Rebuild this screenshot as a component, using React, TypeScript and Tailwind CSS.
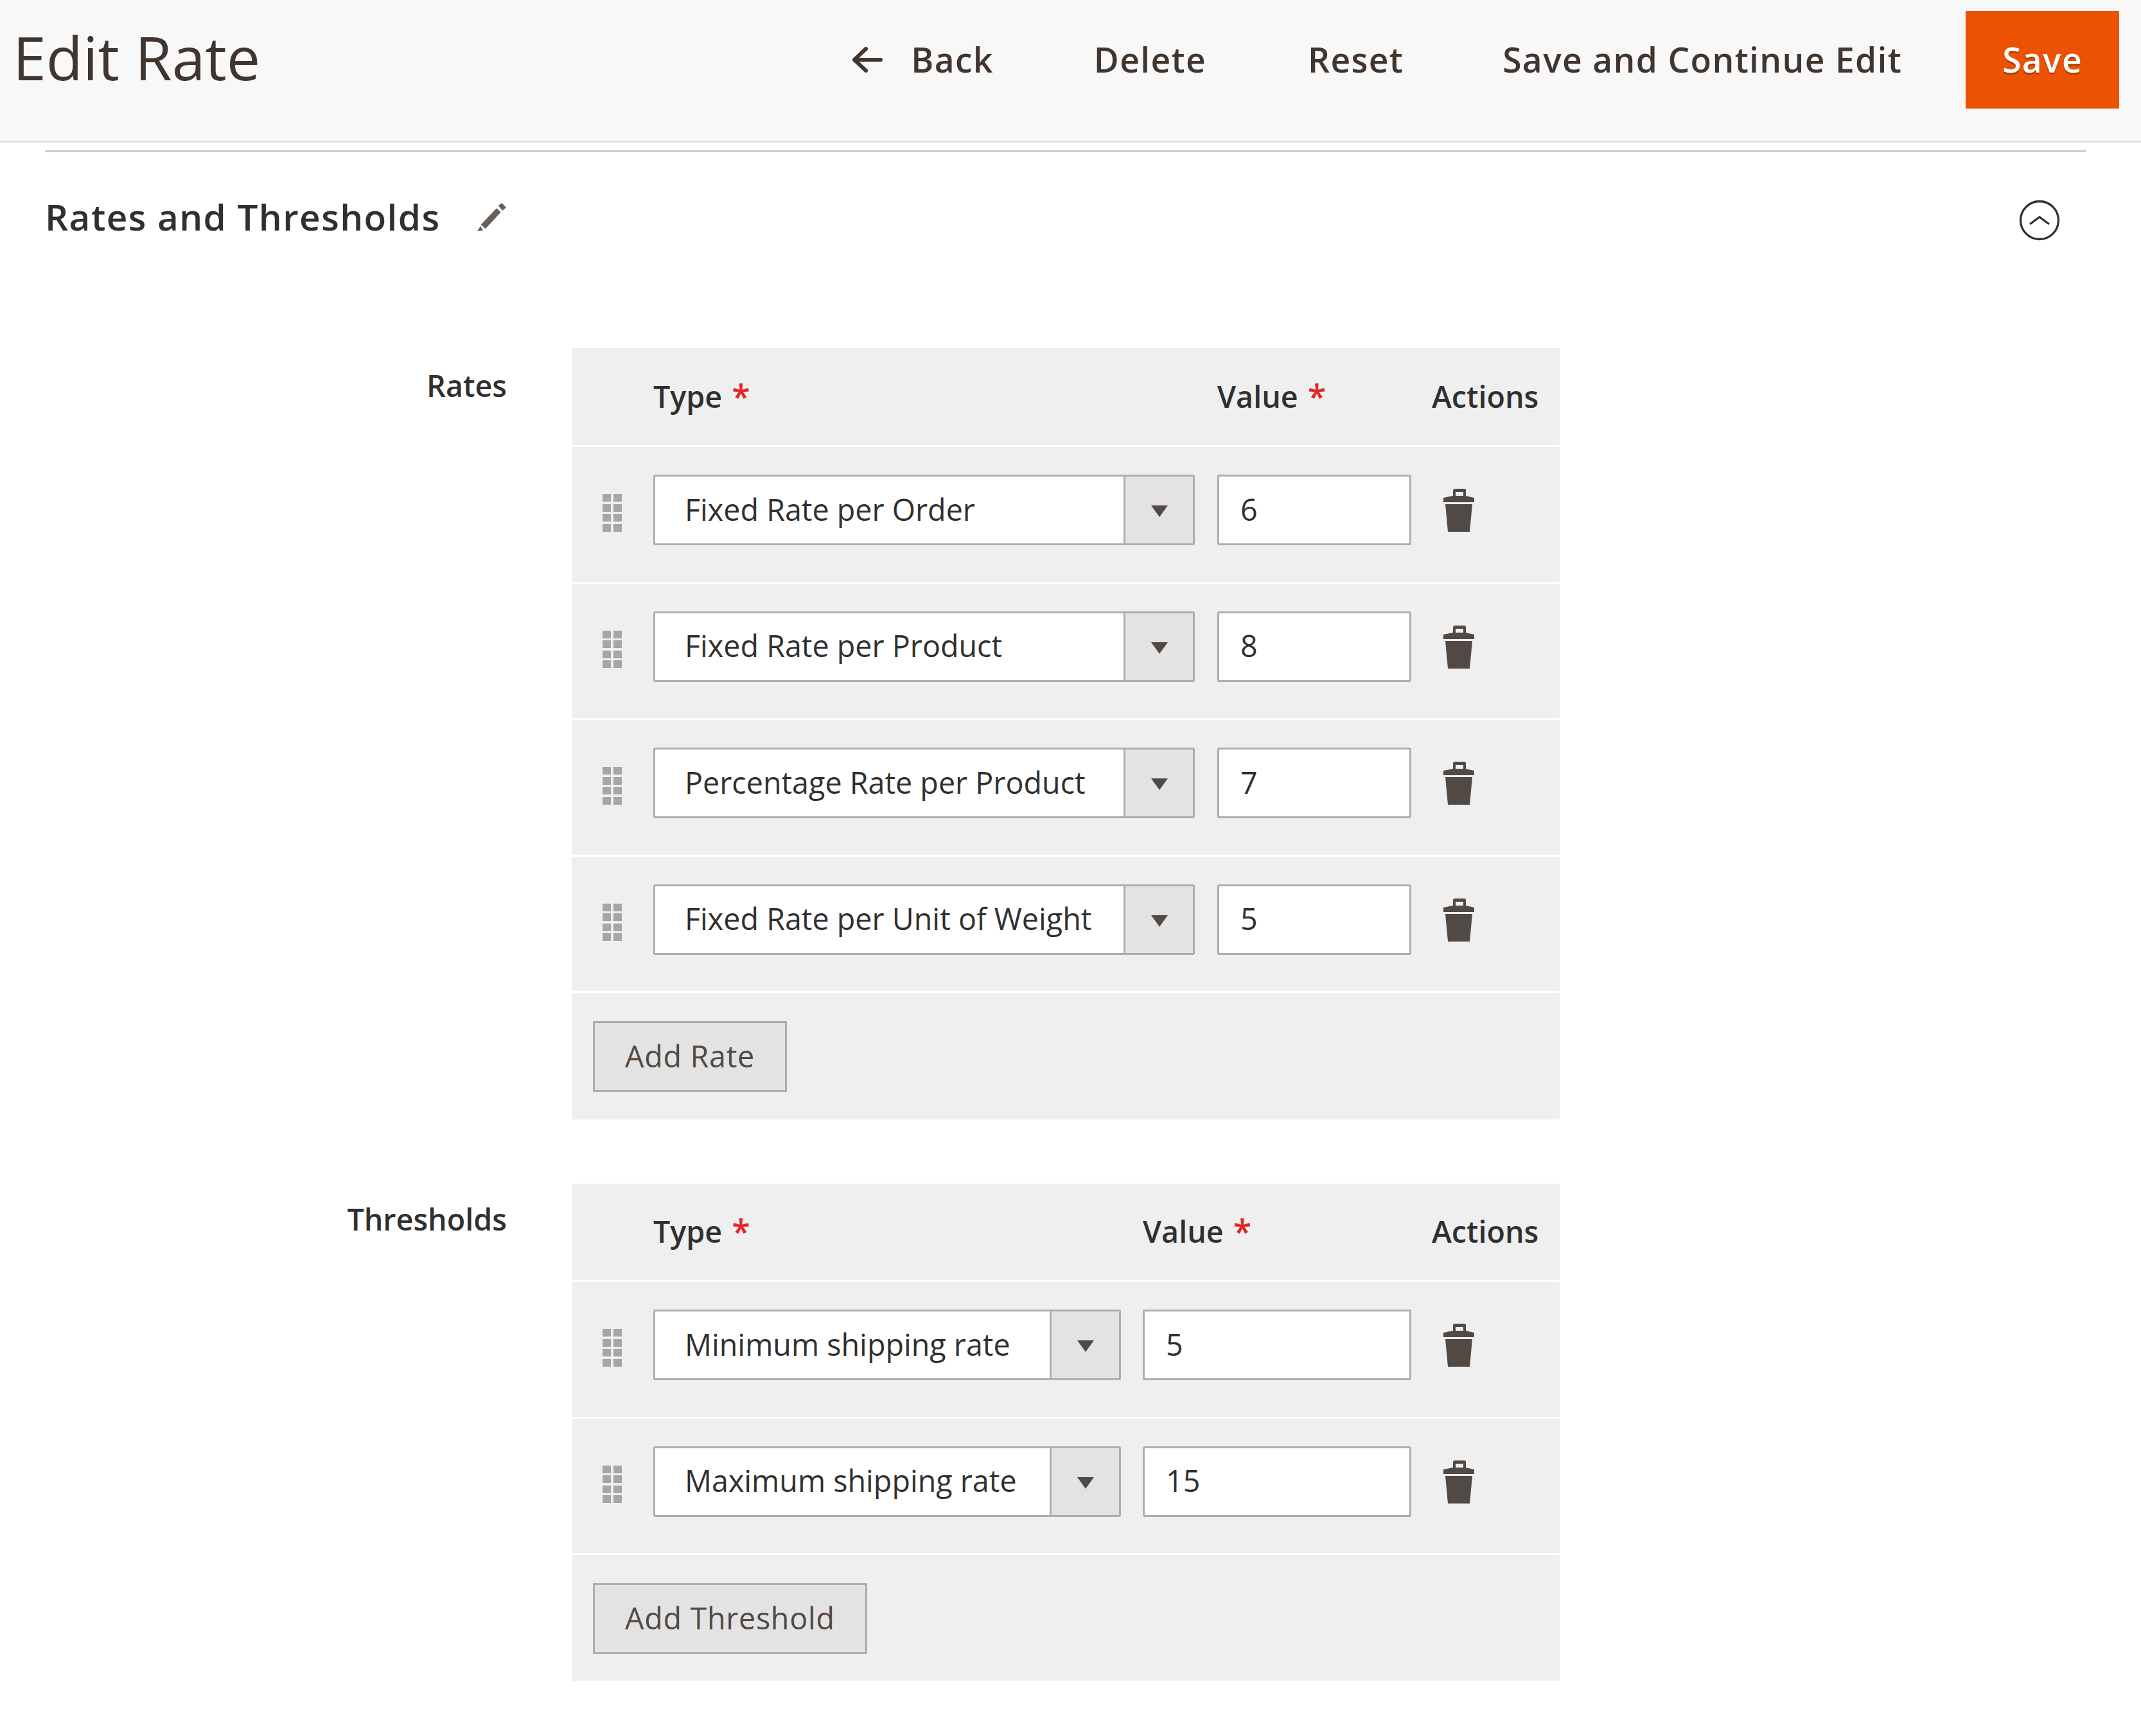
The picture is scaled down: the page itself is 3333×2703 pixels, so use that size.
type RowData = { type: string; value: string };

const rates: RowData[] = [
  { type: "Fixed Rate per Order", value: "6" },
  { type: "Fixed Rate per Product", value: "8" },
  { type: "Percentage Rate per Product", value: "7" },
  { type: "Fixed Rate per Unit of Weight", value: "5" },
];

const thresholds: RowData[] = [
  { type: "Minimum shipping rate", value: "5" },
  { type: "Maximum shipping rate", value: "15" },
];

function Grip() {
  return (
    <div className="grid grid-cols-[13px_13px] auto-rows-[12px] gap-x-1 gap-y-[3.5px]">
      {Array.from({ length: 8 }).map((_, i) => (
        <span key={i} className="bg-[#a6a6a6]" />
      ))}
    </div>
  );
}

function Trash() {
  return (
    <svg width="48" height="67" viewBox="0 0 48 67" className="text-[#514943]">
      <path
        fill="currentColor"
        fillRule="evenodd"
        d="M18 0h15a2 2 0 0 1 2 2v9l13 3v7H0v-7l15-3V3a3 3 0 0 1 3-3zm1 5v6h12V5z"
      />
      <path fill="currentColor" d="M3 24h42l-4 43H7z" />
    </svg>
  );
}

function Pencil() {
  return (
    <svg width="45" height="44" viewBox="0 0 45 44" className="text-[#676056]">
      <path
        fill="currentColor"
        d="M32.7 4.3L38.3 0 45 7l-5.7 5zM5.7 33.7L30 8.3l6.7 6-24 26zM0 44l5-8 4 7z"
      />
    </svg>
  );
}

function BackArrow() {
  return (
    <svg width="47" height="40" viewBox="0 0 47 40" fill="none" stroke="currentColor" strokeWidth="6" strokeLinecap="round" strokeLinejoin="round">
      <path d="M21 3L3 20l18 17M3 20h41" />
    </svg>
  );
}

function Collapse() {
  return (
    <svg width="64" height="64" viewBox="0 0 64 64" fill="none" stroke="#303030" strokeWidth="3.3">
      <circle cx="32" cy="32" r="29.5" />
      <path d="M17 38l15-11 15 11" />
    </svg>
  );
}

function Req() {
  return <span className="relative top-[2px] ml-[15px] text-[52px] leading-none text-[#e22626] font-semibold">*</span>;
}

function Rows({
  title,
  titleTop,
  addLabel,
  rows,
  headH,
  footH,
  typeCol,
  selectW,
  dividerW,
  valueCol,
}: {
  title: string;
  titleTop: string;
  addLabel: string;
  rows: RowData[];
  headH: string;
  footH: string;
  typeCol: string;
  selectW: string;
  dividerW: string;
  valueCol: string;
}) {
  return (
    <div className="flex items-start pl-[70px]">
      <div className={`${titleTop} w-[719px] shrink-0 text-right font-semibold text-[#303030]`}>{title}</div>
      <div className="ml-[101px] w-[1538px]">
        <div className={`${headH} flex items-center bg-[#efefef] pb-[2px] pl-[127px] font-semibold text-[#303030]`}>
          <div className={typeCol}>
            Type
            <Req />
          </div>
          <div className={valueCol}>
            Value
            <Req />
          </div>
          <div>Actions</div>
        </div>
        {rows.map((row) => (
          <div key={row.type} className="mt-[3px] flex h-[209.5px] items-start bg-[#efefef]">
            <div className="w-[127px] shrink-0 pt-[73px] pl-[48px]">
              <Grip />
            </div>
            <div className={`${typeCol} pt-[43px]`}>
              <div className={`${selectW} flex h-[110px] rounded-[3px] border-[3px] border-[#adadad] bg-white`}>
                <div className={`${dividerW} flex items-center pb-[3px] pl-[46px] text-[#303030]`}>{row.type}</div>
                <div className="flex flex-1 items-center justify-center border-l-[3px] border-[#adadad] bg-[#e3e3e3]">
                  <span className="mt-[4px] h-0 w-0 border-x-[13px] border-t-[18px] border-x-transparent border-t-[#514943]" />
                </div>
              </div>
            </div>
            <div className={`${valueCol} pt-[43px]`}>
              <input
                readOnly
                value={row.value}
                className="h-[110px] w-[calc(100%-32px)] rounded-[3px] border-[3px] border-[#adadad] bg-white pb-[3px] pl-[33px] text-[#303030] outline-none"
              />
            </div>
            <div className="pt-[65px] pl-[18px]">
              <Trash />
            </div>
          </div>
        ))}
        <div className={`${footH} mt-[3px] bg-[#efefef] pt-[44px] pl-[33px]`}>
          <button className="h-[110px] border-[3px] border-[#adadad] bg-[#e3e3e3] px-[47px] pb-[2px] font-medium tracking-[0.015em] text-[#514943]">
            {addLabel}
          </button>
        </div>
      </div>
    </div>
  );
}

export default function App() {
  return (
    <div className="min-h-[2703px] bg-white pb-[86px] font-['Open_Sans',sans-serif] text-[46.67px]">
      <header className="flex h-[222px] items-start justify-between border-b-[3px] border-[#e3e3e3] bg-[#f8f8f8] pr-[34px] pl-[20px]">
        <h1 className="mt-[24px] text-[93.33px] leading-[1.4] font-normal text-[#41362f]">Edit Rate</h1>
        <div className="mt-[17px] flex h-[152px] items-center gap-[48px] text-[53.33px] tracking-[0.025em] font-semibold text-[#41362f]">
          <button className="flex items-center pr-[53px] pl-[55px]">
            <span className="mr-[44px]">
              <BackArrow />
            </span>
            Back
          </button>
          <button className="px-[55px]">Delete</button>
          <button className="px-[55px]">Reset</button>
          <button className="px-[51px]">Save and Continue Edit</button>
          <button className="flex h-[152px] items-center bg-[#eb5202] px-[57px] text-white [text-shadow:0_3px_0_rgba(0,0,0,0.25)]">
            Save
          </button>
        </div>
      </header>

      <div className="mx-[70px] mt-[12px] w-[3177px] border-t-[3px] border-[#cccccc]" />

      <div className="flex h-[305px] items-start justify-between pt-[58px] pr-[126px] pl-[70px]">
        <div className="flex items-center text-[56.67px] font-semibold tracking-[0.025em] text-[#303030]">
          Rates and Thresholds
          <span className="ml-[58px]">
            <Pencil />
          </span>
        </div>
        <div className="mt-[16px]">
          <Collapse />
        </div>
      </div>

      <Rows
        title="Rates"
        titleTop="pt-[23px]"
        addLabel="Add Rate"
        rows={rates}
        headH="h-[151px]"
        footH="h-[197px]"
        typeCol="w-[878px] shrink-0"
        selectW="w-[843px]"
        dividerW="w-[729px]"
        valueCol="w-[334px] shrink-0"
      />
      <div className="h-[100px]" />
      <Rows
        title="Thresholds"
        titleTop="pt-[20px]"
        addLabel="Add Threshold"
        rows={thresholds}
        headH="h-[150px]"
        footH="h-[196px]"
        typeCol="w-[762px] shrink-0"
        selectW="w-[728px]"
        dividerW="w-[614px]"
        valueCol="w-[450px] shrink-0"
      />
    </div>
  );
}
